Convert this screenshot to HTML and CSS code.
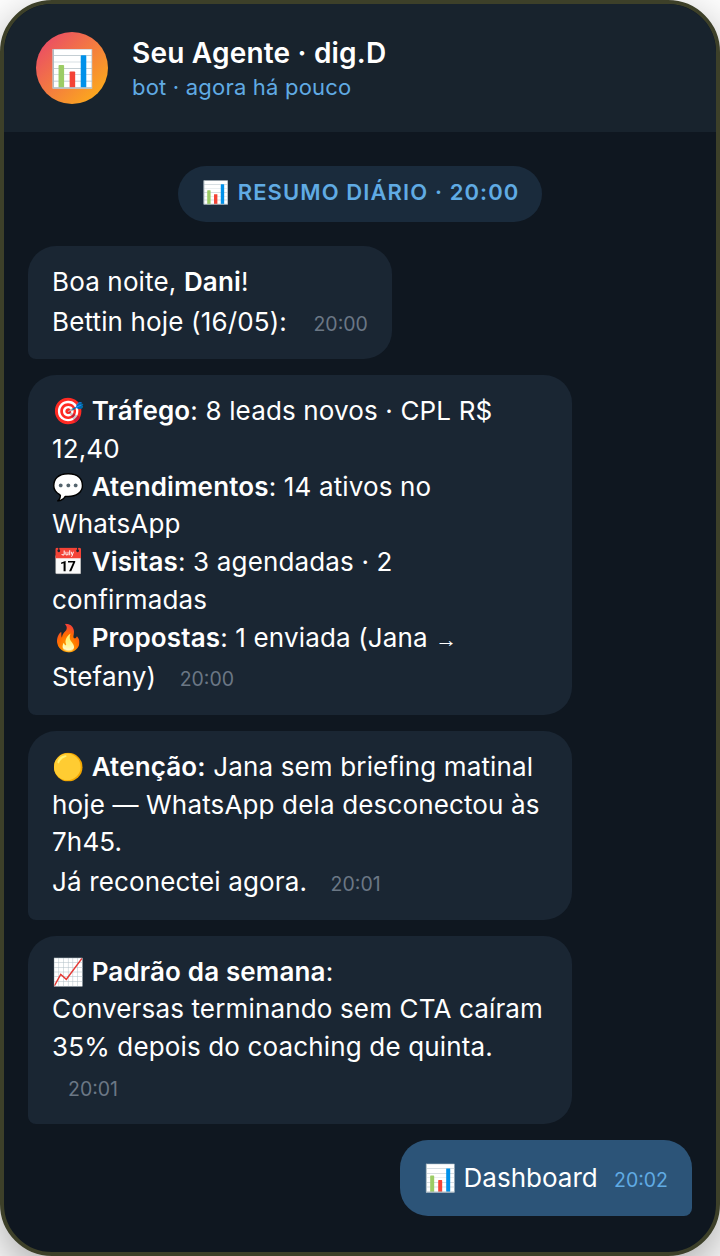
FILE: index.html
```html
<!DOCTYPE html>
<html lang="pt-BR">
<head>
    <meta charset="UTF-8">
    <meta name="viewport" content="width=device-width, initial-scale=1.0">
    <title>Seu Agente · dig.D</title>
    <link rel="stylesheet" href="styles.css">
</head>
<body>
    <div class="phone">
        <header class="chat-header">
            <div class="avatar">📊</div>
            <div class="chat-info">
                <div class="chat-name">Seu Agente · dig.D</div>
                <div class="chat-status">bot · agora há pouco</div>
            </div>
        </header>
        <main class="chat">
            <div class="day-pill"><span class="pill-icon">📊</span> RESUMO DIÁRIO · 20:00</div>
            <div class="msg greet">Boa noite, <b>Dani</b>!<br>Bettin hoje (16/05): <span class="time">20:00</span></div>
            <div class="msg wide">🎯 <b>Tráfego</b>: 8 leads novos · CPL R$ 12,40<br>💬 <b>Atendimentos</b>: 14 ativos no WhatsApp<br>📅 <b>Visitas</b>: 3 agendadas · 2 confirmadas<br>🔥 <b>Propostas</b>: 1 enviada (Jana <span class="arrow">→</span> Stefany) <span class="time">20:00</span></div>
            <div class="msg wide">🟡 <b>Atenção:</b> Jana sem briefing matinal hoje — WhatsApp dela desconectou às 7h45.<br>Já reconectei agora. <span class="time">20:01</span></div>
            <div class="msg wide">📈 <b>Padrão da semana</b>:<br>Conversas terminando sem CTA caíram 35% depois do coaching de quinta. <span class="time">20:01</span></div>
            <div class="msg out">📊 Dashboard <span class="time">20:02</span></div>
        </main>
    </div>
</body>
</html>
```

FILE: styles.css
```css
* {
    box-sizing: border-box;
}
html, body {
    height: 100%;
}
body {
    margin: 0;
    background: #fff;
    font-family: Inter, "Liberation Sans", sans-serif;
    overflow: hidden;
}
.phone {
    height: 1256px;
    border: 4px solid #3d4029;
    border-radius: 52px;
    background: #0f1720;
    overflow: hidden;
    box-shadow: 0 16px 48px rgba(0,0,0,0.35);
    display: flex;
    flex-direction: column;
}
.chat-header {
    height: 128px;
    padding: 0 32px;
    background: #18232d;
    display: flex;
    align-items: center;
    gap: 24px;
}
.avatar {
    width: 72px;
    height: 72px;
    border-radius: 50%;
    background: linear-gradient(135deg, #e8406f, #ffb810);
    display: flex;
    align-items: center;
    justify-content: center;
    font-size: 36px;
}
.chat-name {
    color: #fff;
    font-size: 28px;
    font-weight: 600;
    letter-spacing: 0.2px;
    line-height: 34px;
}
.chat-status {
    color: #60abe4;
    font-size: 22px;
    letter-spacing: 0.2px;
    line-height: 28px;
    margin-top: 3px;
}
.chat {
    flex: 1;
    padding: 34px 24px 0;
    display: flex;
    flex-direction: column;
    align-items: flex-start;
    gap: 16px;
}
.day-pill {
    align-self: center;
    height: 56px;
    padding: 0 23px 4px 24px;
    border-radius: 28px;
    background: #1a2b3c;
    color: #60abe4;
    font-size: 22px;
    font-weight: 600;
    letter-spacing: 1.1px;
    display: flex;
    align-items: center;
    gap: 8px;
    margin-bottom: 8px;
}
.msg {
    max-width: 544px;
    padding: 17px 24px 19px;
    border-radius: 28px 28px 28px 8px;
    background: #1a2633;
    color: #fff;
    font-size: 26px;
    letter-spacing: 0.15px;
    line-height: 1.45;
}
.msg b {
    font-weight: 600;
}
.wide {
    width: 544px;
}
.arrow {
    font-family: "Liberation Sans", sans-serif;
    font-size: 22px;
    line-height: 1;
}
.time {
    display: inline-block;
    margin: 9px 0 2px 16px;
    color: #6b7785;
    font-size: 19.5px;
    letter-spacing: 0;
}
.greet .time {
    margin-left: 19px;
}
.out {
    align-self: flex-end;
    border-radius: 28px 28px 8px 28px;
    background: #2c5478;
    letter-spacing: 0;
}
.out .time {
    margin-left: 9px;
    color: #60abe4;
}
```
